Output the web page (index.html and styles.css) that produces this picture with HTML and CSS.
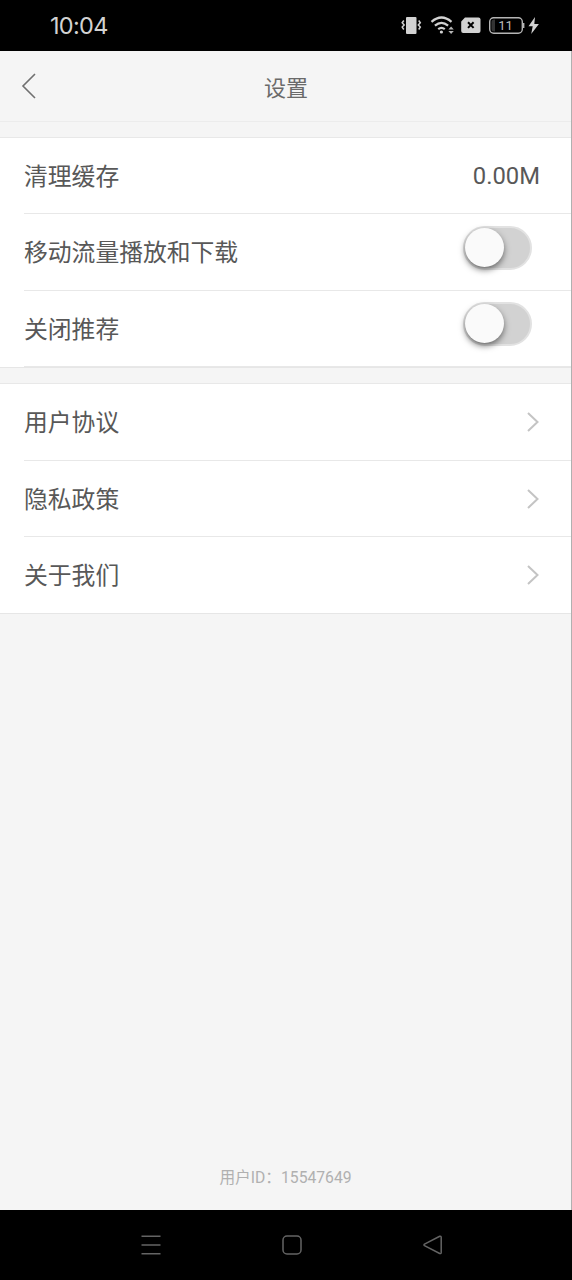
FILE: index.html
```html
<!DOCTYPE html>
<html lang="zh-CN">
<head>
<meta charset="utf-8">
<title>设置</title>
<link rel="stylesheet" href="styles.css">
</head>
<body>
<div class="phone">
  <div class="status">
    <span class="clock">10:04</span>
    <svg class="status-icons" width="142" height="24" viewBox="400 14 142 24" fill="none">
      <rect x="406" y="17" width="10.5" height="17" rx="1" fill="#d2d2d2"/>
      <path d="M403.8 20.5l-1.6 2.2 2 2.2-2 2.2 1.6 2.4M418.7 20.5l1.6 2.2-2 2.2 2 2.2-1.6 2.4" stroke="#d2d2d2" stroke-width="1.5"/>
      <path d="M431.5 21.8q10-8.6 20 0M434.9 25.6q6.6-5.6 13.2 0M438.2 29.2q3.3-2.6 6.6 0" stroke="#d2d2d2" stroke-width="2.2"/>
      <circle cx="441.4" cy="32" r="1.6" fill="#d2d2d2"/>
      <path d="M448.4 29.4l2.7-2.9 2.7 2.9zM448.4 31l2.7 2.9 2.7-2.9z" fill="#b5b5b5"/>
      <path d="M465 17.5h13.5q2 0 2 2V31q0 2-2 2h-15.300q-2 0-2-2v-9.500z" fill="#d2d2d2"/>
      <path d="M468 22.300l5.600 5.600M473.600 22.300l-5.600 5.600" stroke="#000" stroke-width="2"/>
      <rect x="489.700" y="17.700" width="32.600" height="15.600" rx="4" stroke="#b5b5b5" stroke-width="1.400"/>
      <path d="M495 19.500h-1q-2.500 0-2.500 2.500v7q0 2.500 2.500 2.500h1z" fill="#333"/>
      <path d="M523.600 23v5" stroke="#b5b5b5" stroke-width="1.600"/>
      <text class="battery-level" x="505.500" y="30" text-anchor="middle">11</text>
      <path d="M535 17l-6.500 9.300h4.200l-1.500 7.700 7.700-10h-4.600z" fill="#d2d2d2"/>
    </svg>
  </div>
  <main class="screen">
    <header class="header">
      <svg class="back" width="18" height="28" viewBox="0 0 18 28"><path d="M15 2L3 14l12 12" fill="none" stroke="#707070" stroke-width="1.600"/></svg>
      <h1 class="title">设置</h1>
    </header>
    <section class="group group-first">
      <div class="row"><span class="label">清理缓存</span><span class="size">0.00M</span></div>
      <div class="row"><span class="label">移动流量播放和下载</span><span class="switch"><span class="knob"></span></span></div>
      <div class="row"><span class="label">关闭推荐</span><span class="switch"><span class="knob"></span></span></div>
    </section>
    <section class="group group-second">
      <div class="row"><span class="label">用户协议</span><svg class="arrow" width="16" height="22" viewBox="0 0 16 22"><path d="M3 2l9.500 9L3 20"/></svg></div>
      <div class="row"><span class="label">隐私政策</span><svg class="arrow" width="16" height="22" viewBox="0 0 16 22"><path d="M3 2l9.500 9L3 20"/></svg></div>
      <div class="row"><span class="label">关于我们</span><svg class="arrow" width="16" height="22" viewBox="0 0 16 22"><path d="M3 2l9.500 9L3 20"/></svg></div>
    </section>
    <footer class="user-id">用户ID：15547649</footer>
  </main>
  <nav class="nav">
    <svg width="22" height="22" viewBox="0 0 22 22"><path d="M1.500 2.300h19M1.500 11h19M1.500 19.700h19"/></svg>
    <svg width="22" height="22" viewBox="0 0 22 22"><rect x="2" y="2" width="18" height="18" rx="4"/></svg>
    <svg width="22" height="22" viewBox="0 0 22 22"><path d="M2.500 10.200L17.700 2.300q1.500-.5 1.500 1V18.500q0 1.500-1.500 1L2.500 11.700q-1-.8 0-1.500z"/></svg>
  </nav>
</div>
</body>
</html>
```
FILE: styles.css
```css
* {
  box-sizing: border-box;
}

body {
  margin: 0;
  background: #000;
  font-family: Roboto, "Noto Sans CJK SC", sans-serif;
}

.phone {
  display: flex;
  flex-direction: column;
  width: 572px;
  height: 1280px;
}

.status {
  display: flex;
  align-items: center;
  justify-content: space-between;
  height: 51px;
  padding: 1px 30px 0 50px;
  background: #000;
}

.clock {
  margin-bottom: 2px;
  color: #d2d2d2;
  font-size: 23.5px;
  font-family: Inter, sans-serif;
  letter-spacing: -0.7px;
}

.battery-level {
  fill: #bdbdbd;
  font-size: 13px;
}

.screen {
  display: flex;
  flex: 1;
  flex-direction: column;
  border-right: 1px solid #b0b0b0;
  background: #f5f5f5;
}

.header {
  display: grid;
  grid-template-columns: 50px 1fr 50px;
  align-items: center;
  height: 71px;
  border-bottom: 1px solid #ececec;
}

.back {
  margin-left: 20px;
}

.title {
  margin: 5px 0 0 1px;
  color: #6a6a6a;
  font-size: 22px;
  font-weight: 400;
  line-height: 32px;
  text-align: center;
}

.group {
  margin-top: 15px;
  padding-left: 24px;
  border-top: 1px solid #e8e8e8;
  border-bottom: 1px solid #e6e6e6;
  background: #fff;
  color: #585858;
  font-size: 23.8px;
  line-height: 34px;
}

.group-second {
  margin-top: 15.400px;
}

.row {
  display: flex;
  align-items: center;
  justify-content: space-between;
  height: 76.300px;
  padding-right: 31px;
  border-bottom: 1px solid #e8e8e8;
}

.group-second .row:last-child {
  height: 76px;
  border-bottom: 0;
}

.label {
  padding-top: 3px;
}

.group-second .row:last-child .label {
  padding-top: 2px;
}

.size {
  padding-top: 1px;
}

.switch {
  width: 69px;
  height: 44px;
  margin: -4px 8px 4px 0;
  padding: 1px 0 0;
  border: 2px solid #e2e2e2;
  border-radius: 22px;
  background: #d2d2d2;
}

.knob {
  display: block;
  width: 39px;
  height: 39px;
  margin-top: -1px;
  border-radius: 50%;
  background: #fafafa;
  box-shadow: 0 3px 6px rgba(0, 0, 0, 0.5);
}

.arrow {
  margin: 1px -1px 0 0;
  fill: none;
  stroke: #c4c4c4;
  stroke-width: 2;
}

.user-id {
  margin-top: auto;
  padding-bottom: 20px;
  color: #b0b0b0;
  font-size: 15.700px;
  line-height: 24px;
  text-align: center;
}

.nav {
  display: flex;
  align-items: center;
  gap: 119px;
  height: 70px;
  padding-left: 140px;
  background: #000;
}

.nav svg {
  fill: none;
  stroke: #646464;
  stroke-width: 1.500;
}
```
